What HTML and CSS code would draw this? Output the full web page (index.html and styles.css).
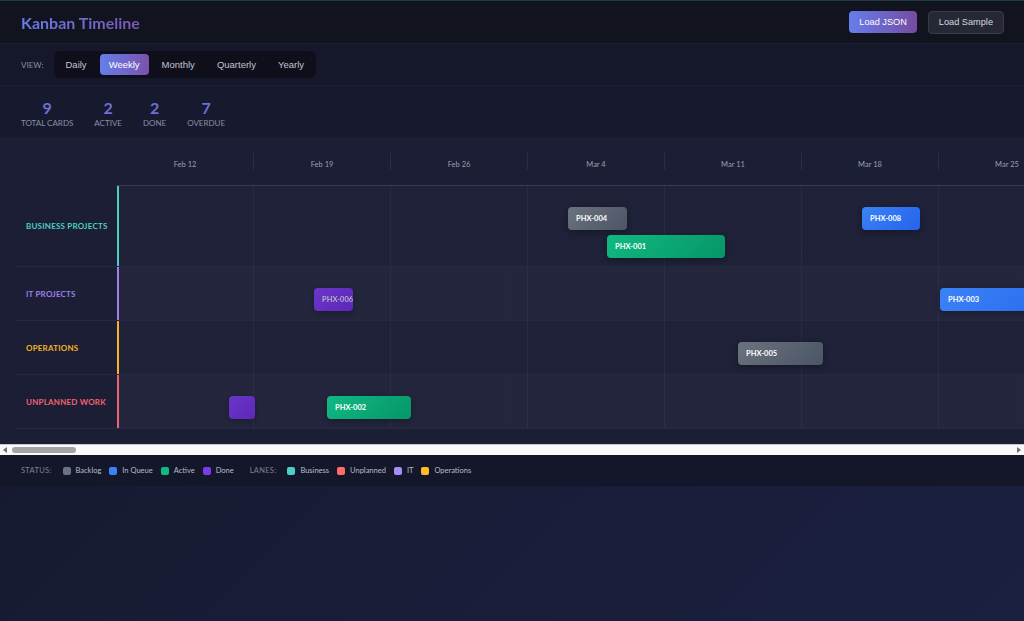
FILE: index.html
```html
<!DOCTYPE html>
<html lang="en">
<head>
    <meta charset="UTF-8">
    <meta name="viewport" content="width=device-width, initial-scale=1.0">
    <title>Kanban Timeline</title>
    <link rel="stylesheet" href="styles.css">
</head>
<body>

    <header class="app-header">
        <h1 class="title">Kanban Timeline</h1>
        <div class="header-actions">
            <button class="btn btn-primary">Load JSON</button>
            <button class="btn btn-secondary">Load Sample</button>
        </div>
    </header>

    <!-- View switcher -->
    <section class="view-bar">
        <span class="view-label">View:</span>
        <div class="view-switch">
            <button class="view-btn">Daily</button>
            <button class="view-btn active">Weekly</button>
            <button class="view-btn">Monthly</button>
            <button class="view-btn">Quarterly</button>
            <button class="view-btn">Yearly</button>
        </div>
    </section>

    <!-- Stats -->
    <section class="stats">
        <div class="stat"><div class="stat-value">9</div><div class="stat-label">Total Cards</div></div>
        <div class="stat"><div class="stat-value">2</div><div class="stat-label">Active</div></div>
        <div class="stat"><div class="stat-value">2</div><div class="stat-label">Done</div></div>
        <div class="stat"><div class="stat-value">7</div><div class="stat-label">Overdue</div></div>
    </section>

    <!-- Timeline -->
    <section class="timeline">
        <div class="timeline-inner">
            <div class="date-row">
                <div class="date-spacer"></div>
                <div class="dates">
                    <div class="date-cell">Feb 12</div>
                    <div class="date-cell">Feb 19</div>
                    <div class="date-cell">Feb 26</div>
                    <div class="date-cell">Mar 4</div>
                    <div class="date-cell">Mar 11</div>
                    <div class="date-cell">Mar 18</div>
                    <div class="date-cell">Mar 25</div>
                    <div class="date-cell">Apr 1</div>
                </div>
            </div>

            <div class="lane lane-business">
                <div class="lane-label">Business Projects</div>
                <div class="lane-track">
                    <div class="slot">
                        <div class="card backlog" style="left:449px;width:59px">PHX-004</div>
                        <div class="card queue" style="left:743px;width:58px">PHX-008</div>
                    </div>
                    <div class="slot">
                        <div class="card active" style="left:488px;width:118px">PHX-001</div>
                    </div>
                </div>
            </div>

            <div class="lane lane-it">
                <div class="lane-label">IT Projects</div>
                <div class="lane-track">
                    <div class="slot">
                        <div class="card done" style="left:195px;width:39px">PHX-006</div>
                        <div class="card queue" style="left:821px;width:160px">PHX-003</div>
                    </div>
                </div>
            </div>

            <div class="lane lane-ops">
                <div class="lane-label">Operations</div>
                <div class="lane-track">
                    <div class="slot">
                        <div class="card backlog" style="left:619px;width:85px">PHX-005</div>
                    </div>
                </div>
            </div>

            <div class="lane lane-unplanned">
                <div class="lane-label">Unplanned Work</div>
                <div class="lane-track">
                    <div class="slot">
                        <div class="card done" style="left:110px;width:26px"></div>
                        <div class="card active" style="left:208px;width:84px">PHX-002</div>
                    </div>
                </div>
            </div>
        </div>
    </section>

    <!-- horizontal scrollbar of the timeline -->
    <div class="scrollbar">
        <span class="scroll-arrow arrow-left"></span>
        <span class="scroll-thumb"></span>
        <span class="scroll-arrow arrow-right"></span>
    </div>

    <!-- Legend -->
    <section class="legend">
        <span class="legend-title">Status:</span>
        <span class="legend-item"><i class="swatch sw-backlog"></i>Backlog</span>
        <span class="legend-item"><i class="swatch sw-queue"></i>In Queue</span>
        <span class="legend-item"><i class="swatch sw-active"></i>Active</span>
        <span class="legend-item"><i class="swatch sw-done"></i>Done</span>
        <span class="legend-title lanes-title">Lanes:</span>
        <span class="legend-item"><i class="swatch sw-business"></i>Business</span>
        <span class="legend-item"><i class="swatch sw-unplanned"></i>Unplanned</span>
        <span class="legend-item"><i class="swatch sw-it"></i>IT</span>
        <span class="legend-item"><i class="swatch sw-ops"></i>Operations</span>
    </section>

</body>
</html>
```

FILE: styles.css
```css
/* General */
body {
    font-family: Lato, "Open Sans", sans-serif;
    margin: 0;
    padding: 0;
    min-height: 100vh;
    color: #e4e6f0;
    background: linear-gradient(135deg, #141728 0%, #181c36 50%, #1b2040 100%);
}

button {
    font-family: "Liberation Sans", Arial, sans-serif;
    cursor: pointer;
}

/* Header */
.app-header {
    display: flex;
    align-items: center;
    justify-content: space-between;
    height: 42px;
    padding: 0 20px 0 21px;
    background: #11131f;
    border-top: 1px solid #1f3b40;
    border-bottom: 1px solid #1e2031;
}

.title {
    margin: 0;
    font-size: 16px;
    font-weight: 700;
    background: linear-gradient(90deg, #667eea, #7d55b5);
    -webkit-background-clip: text;
    background-clip: text;
    color: transparent;
}

.header-actions {
    display: flex;
    gap: 11px;
}

.btn {
    font-size: 9.2px;
    height: 22px;
    padding: 0 10px;
    border-radius: 4px;
    color: #fff;
    border: none;
}

.btn-primary {
    background: linear-gradient(90deg, #667eea, #764ba2);
}

.btn-secondary {
    height: 23px;
    background: #262935;
    border: 1px solid #383b48;
    color: #d6d8e2;
}

/* View bar */
.view-bar {
    display: flex;
    align-items: center;
    gap: 10px;
    height: 41px;
    padding: 0 21px;
    background: #15172a;
    border-bottom: 1px solid #1d2034;
}

.view-label {
    font-size: 8px;
    text-transform: uppercase;
    color: #8c8fa4;
}

.view-switch {
    display: flex;
    gap: 4px;
    padding: 3px;
    background: #0e0f1a;
    border-radius: 6px;
}

.view-btn {
    font-size: 9.5px;
    height: 21px;
    padding: 0 9px;
    border: none;
    border-radius: 4px;
    background: transparent;
    color: #c2c4d2;
}

.view-btn.active {
    background: linear-gradient(90deg, #667eea, #7a52ad);
    color: #fff;
}

/* Stats */
.stats {
    display: flex;
    align-items: flex-start;
    gap: 21px;
    height: 51px;
    box-sizing: border-box;
    padding: 13px 21px 0;
    background: #171a2e;
}

.stat {
    text-align: center;
}

.stat-value {
    font-size: 16px;
    font-weight: 700;
    line-height: 18px;
    color: #6f6fd6;
}

.stat-label {
    font-size: 8px;
    text-transform: uppercase;
    color: #8c8fa4;
    margin-top: 1px;
}

/* Timeline */
.timeline {
    overflow: hidden;
    padding: 16px 0 15px 16px;
    background: #1b1e35;
}

.timeline-inner {
    width: 16000px;
}

.date-row {
    display: flex;
}

.date-spacer {
    flex: 0 0 101px;
}

.dates {
    flex: 1;
    display: flex;
    height: 32px;
    border-bottom: 1px solid #383b53;
}

.date-cell {
    flex: 0 0 137px;
    box-sizing: border-box;
    height: 17px;
    padding-top: 7px;
    line-height: 9px;
    border-right: 1px solid rgba(255, 255, 255, 0.07);
    text-align: center;
    font-size: 7.5px;
    color: #9c9fb3;
}

/* Lanes */
.lane {
    display: flex;
    border-bottom: 1px solid rgba(255, 255, 255, 0.05);
}

.lane-label {
    flex: 0 0 101px;
    box-sizing: border-box;
    display: flex;
    align-items: center;
    padding-left: 10px;
    font-size: 8px;
    font-weight: 700;
    text-transform: uppercase;
    letter-spacing: 0.2px;
}

.lane-track {
    flex: 1;
    display: flex;
    flex-direction: column;
    gap: 5px;
    padding: 21px 0 9px;
    border-left: 2px solid;
    background-origin: border-box;
    background-image:
        repeating-linear-gradient(to right, transparent 0 136px, rgba(255, 255, 255, 0.045) 136px 137px),
        linear-gradient(rgba(255, 255, 255, 0.015), rgba(255, 255, 255, 0.015));
}

.lane-business .lane-track {
    padding-bottom: 8px;
}

.lane:nth-child(odd) .lane-track {
    background-image:
        repeating-linear-gradient(to right, transparent 0 136px, rgba(255, 255, 255, 0.045) 136px 137px),
        linear-gradient(rgba(255, 255, 255, 0.035), rgba(255, 255, 255, 0.035));
}

.lane-business .lane-label { color: #4ecdc4; }
.lane-business .lane-track { border-left-color: #4ecdc4; }
.lane-it .lane-label { color: #9d80ea; }
.lane-it .lane-track { border-left-color: #9d80ea; }
.lane-ops .lane-label { color: #f2b424; }
.lane-ops .lane-track { border-left-color: #f2b424; }
.lane-unplanned .lane-label { color: #ef6370; }
.lane-unplanned .lane-track { border-left-color: #ef6370; }

.slot {
    position: relative;
    height: 23px;
}

.card {
    position: absolute;
    top: 0;
    height: 23px;
    box-sizing: border-box;
    padding-left: 8px;
    line-height: 23px;
    border-radius: 4px;
    font-size: 7.5px;
    font-weight: 700;
    color: #fff;
    white-space: nowrap;
    overflow: hidden;
    box-shadow: 0 2px 6px rgba(0, 0, 0, 0.3);
}

.card.backlog { background: linear-gradient(135deg, #6b7280, #4b5563); }
.card.queue { background: linear-gradient(135deg, #3b82f6, #2563eb); }
.card.active { background: linear-gradient(135deg, #10b981, #059669); }
.card.done {
    background: linear-gradient(135deg, #7c3aed, #6d28d9);
    opacity: 0.8;
    color: #d8d2e6;
}

/* Scrollbar */
.scrollbar {
    display: flex;
    align-items: center;
    height: 10px;
    background: #fafafa;
    border-top: 1px solid #c8c8cc;
}

.scroll-thumb {
    width: 64px;
    height: 6px;
    margin-left: 2px;
    border-radius: 3px;
    background: #a4a4a6;
}

.scroll-arrow {
    width: 0;
    height: 0;
    border-top: 3px solid transparent;
    border-bottom: 3px solid transparent;
}

.arrow-left {
    margin-left: 3px;
    margin-right: 3px;
    border-right: 4px solid #707074;
}

.arrow-right {
    margin-left: auto;
    margin-right: 3px;
    border-left: 4px solid #707074;
}

/* Legend */
.legend {
    display: flex;
    align-items: center;
    gap: 8px;
    height: 31px;
    padding: 0 21px;
    background: #141729;
    font-size: 7.5px;
    color: #b8bbcc;
}

.legend-title {
    text-transform: uppercase;
    letter-spacing: 0.3px;
    color: #7f8298;
    margin-right: 3px;
}

.lanes-title {
    margin-left: 8px;
}

.legend-item {
    display: flex;
    align-items: center;
    gap: 5px;
}

.swatch {
    width: 8px;
    height: 8px;
    border-radius: 2px;
}

.sw-backlog { background: #6b7280; }
.sw-queue { background: #3b82f6; }
.sw-active { background: #10b981; }
.sw-done { background: #7c3aed; }
.sw-business { background: #4ecdc4; }
.sw-unplanned { background: #ff6b6b; }
.sw-it { background: #a78bfa; }
.sw-ops { background: #fbbf24; }
```
